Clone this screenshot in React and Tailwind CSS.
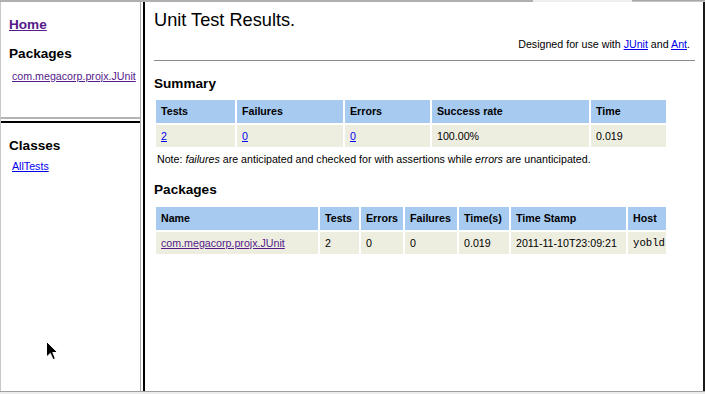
const summaryCols = [
  ['Tests', 'w-[79px]'],
  ['Failures', 'w-[106px]'],
  ['Errors', 'w-[85px]'],
  ['Success rate', 'w-[157px]'],
  ['Time', 'w-[75px]'],
];

const packageCols = [
  ['Name', 'w-[162px]'],
  ['Tests', 'w-[39px]'],
  ['Errors', 'w-[42px]'],
  ['Failures', 'w-[52px]'],
  ['Time(s)', 'w-[50px]'],
  ['Time Stamp', 'w-[115px]'],
  ['Host', 'w-[38px]'],
];

function Th({ children, width }) {
  return (
    <th className={`${width} h-[23px] px-[5px] py-0 bg-[#a6caf0] text-left align-middle font-bold`}>
      {children}
    </th>
  );
}

function Td({ children, mono }) {
  return (
    <td
      className={`h-[22px] px-[5px] py-0 bg-[#eeeee0] align-middle whitespace-nowrap ${
        mono ? "font-['Liberation_Mono',monospace]" : ''
      }`}
    >
      {children}
    </td>
  );
}

function Link({ children, visited }) {
  return <a className={visited ? 'text-[#551a8b] underline' : 'text-[#0000ee] underline'}>{children}</a>;
}

function Cursor() {
  return (
    <svg className="absolute left-[46px] top-[341px]" width="13" height="20" viewBox="0 0 13 20">
      <path d="M0.5 0.5 L0.5 16 L4.3 12.4 L7 18.6 L9.4 17.6 L6.8 11.5 L11.6 11.5 Z" fill="#000" stroke="#fff" strokeWidth="1" />
    </svg>
  );
}

export default function App() {
  return (
    <div className="relative w-[705px] h-[394px] overflow-hidden bg-white text-black font-['Liberation_Sans',Arial,sans-serif] text-[10.67px] leading-[13px]">
      {/* tab strip remnant */}
      <div className="flex h-[2px] bg-[#c4c4c4]">
        <div className="w-[533px] bg-[#b0b0b0]" />
        <div className="w-[99px] bg-[#eeeeee]" />
        <div className="flex-1 border-t border-[#a8a8a8]" />
      </div>

      <div className="flex h-[389px]">
        {/* left frames */}
        <div className="flex w-[141px] flex-col border-l border-[#c8c8c8] border-r border-r-[#a9a9a9]">
          <div className="h-[115px] pl-[8px] pt-[15px]">
            <h2 className="text-[13.6px] leading-[16px] font-bold">
              <Link visited>Home</Link>
            </h2>
            <h2 className="mt-[13px] text-[13.6px] leading-[16px] font-bold">Packages</h2>
            <div className="mt-[8px] pl-[3px] whitespace-nowrap">
              <Link visited>com.megacorp.projx.JUnit</Link>
            </div>
          </div>
          <div className="h-[2px] bg-[#b4b4b4]" />
          <div className="h-[2px]" />
          <div className="h-[2px] bg-black" />
          <div className="flex-1 pl-[8px] pt-[15px]">
            <h2 className="text-[13.6px] leading-[16px] font-bold">Classes</h2>
            <div className="mt-[6px] pl-[3px]">
              <Link>AllTests</Link>
            </div>
          </div>
        </div>
        <div className="w-[2px]" />
        <div className="w-[2px] bg-black" />

        {/* main frame */}
        <div className="w-[558px] pl-[9px] pr-[8px] pt-[8px]">
          <h1 className="text-[18.2px] leading-[21px] font-normal">Unit Test Results.</h1>
          <div className="mt-[7px] pr-[5px] text-right">
            Designed for use with <Link>JUnit</Link> and <Link>Ant</Link>.
          </div>
          <div className="mt-[9px] h-[1px] bg-[#8a8a8a]" />

          <h2 className="mt-[15px] text-[13.6px] leading-[16px] font-bold">Summary</h2>
          <table className="mt-[6px] w-[514px] table-fixed border-separate border-spacing-[2px]">
            <thead>
              <tr>
                {summaryCols.map(([label, width]) => (
                  <Th key={label} width={width}>{label}</Th>
                ))}
              </tr>
            </thead>
            <tbody>
              <tr>
                <Td><Link>2</Link></Td>
                <Td><Link>0</Link></Td>
                <Td><Link>0</Link></Td>
                <Td>100.00%</Td>
                <Td>0.019</Td>
              </tr>
            </tbody>
          </table>
          <p className="mt-[4px] pl-[3px]">
            Note: <i>failures</i> are anticipated and checked for with assertions while <i>errors</i> are unanticipated.
          </p>

          <h2 className="mt-[16px] text-[13.6px] leading-[16px] font-bold">Packages</h2>
          <table className="mt-[7px] w-[514px] table-fixed border-separate border-spacing-[2px]">
            <thead>
              <tr>
                {packageCols.map(([label, width]) => (
                  <Th key={label} width={width}>{label}</Th>
                ))}
              </tr>
            </thead>
            <tbody>
              <tr>
                <Td><Link visited>com.megacorp.projx.JUnit</Link></Td>
                <Td>2</Td>
                <Td>0</Td>
                <Td>0</Td>
                <Td>0.019</Td>
                <Td>2011-11-10T23:09:21</Td>
                <Td mono>yobld</Td>
              </tr>
            </tbody>
          </table>
        </div>
        <div className="w-[2px] bg-[#1a1a1a]" />
      </div>

      <div className="h-[1px] bg-[#a0a0a0]" />
      <div className="h-[2px] bg-[#ededed]" />

      <Cursor />
    </div>
  );
}
